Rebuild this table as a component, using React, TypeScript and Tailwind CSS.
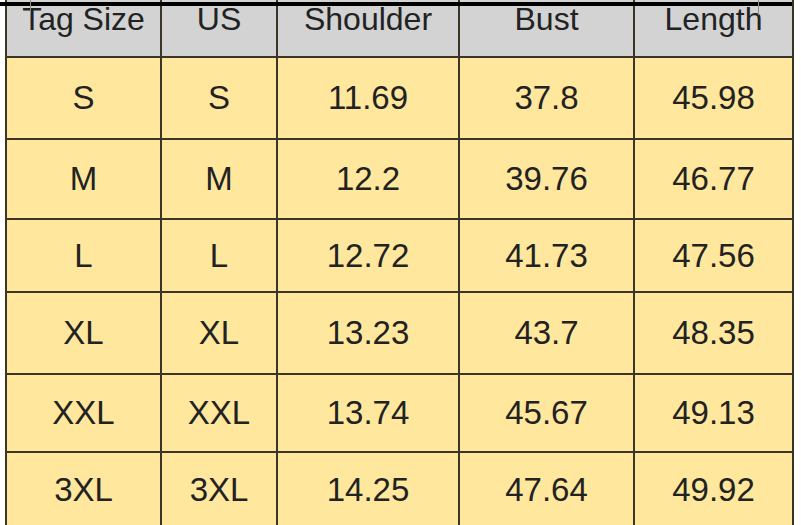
const headers = ["Tag Size", "US", "Shoulder", "Bust", "Length"];

const rows: { cells: string[]; h: string }[] = [
	{ cells: ["S", "S", "11.69", "37.8", "45.98"], h: "h-[82px]" },
	{ cells: ["M", "M", "12.2", "39.76", "46.77"], h: "h-[80px]" },
	{ cells: ["L", "L", "12.72", "41.73", "47.56"], h: "h-[73px]" },
	{ cells: ["XL", "XL", "13.23", "43.7", "48.35"], h: "h-[82px]" },
	{ cells: ["XXL", "XXL", "13.74", "45.67", "49.13"], h: "h-[78px]" },
	{ cells: ["3XL", "3XL", "14.25", "47.64", "49.92"], h: "h-[76px]" },
];

export default function App() {
	return (
		<div className="relative w-[801px] h-[525px] overflow-hidden bg-white font-['Liberation_Sans',Arial,sans-serif] text-[#222222]">
			<div className="ml-[5px] w-[789px] border-l-2 border-[#3a3526] grid grid-cols-[155px_116px_182px_175px_159px]">
				{headers.map((h) => (
					<div
						key={h}
						className="h-[58px] pt-[3px] bg-[#d3d3d4] border-r-2 border-b-2 border-[#3a3526] flex justify-center items-start text-[32px] leading-[32px] overflow-hidden"
					>
						{h}
					</div>
				))}
				{rows.map((row, i) =>
					row.cells.map((c, j) => (
						<div
							key={`${i}-${j}`}
							className={`${row.h} bg-[#ffe79d] border-r-2 border-b-2 border-[#3a3526] flex items-center justify-center text-[33px]`}
						>
							{c}
						</div>
					))
				)}
			</div>

			{/* screenshot edge artifacts */}
			<div className="absolute left-0 top-[2px] w-[792px] h-[4px] bg-black" />
			<div className="absolute left-[30px] top-0 w-px h-[15px] bg-[#8a8a8a]" />
			<div className="absolute left-[758px] top-0 w-px h-[15px] bg-[#8a8a8a]" />
		</div>
	);
}
